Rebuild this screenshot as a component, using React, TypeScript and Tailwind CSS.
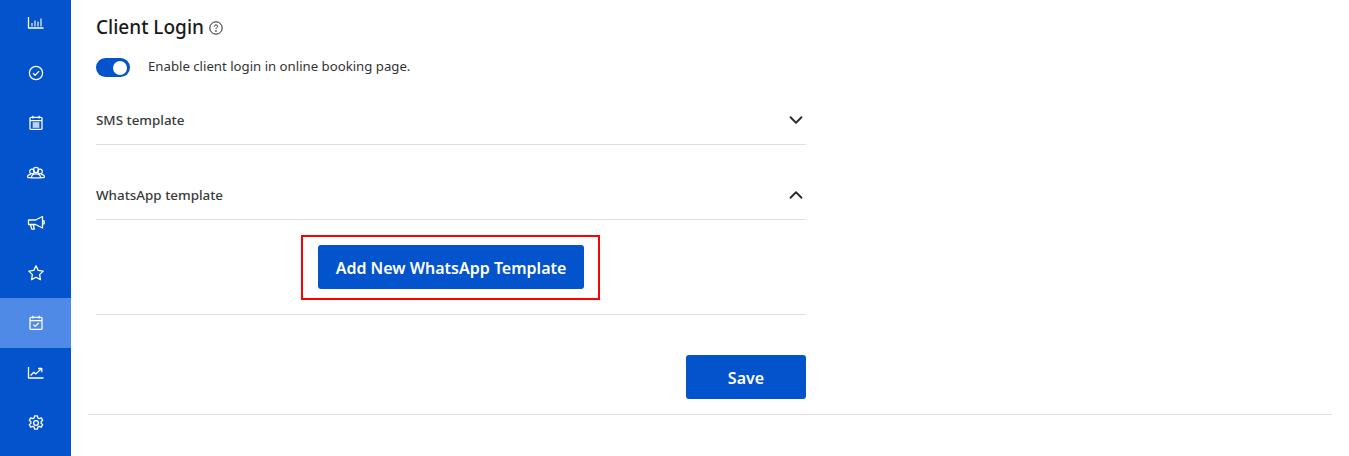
import type { ReactNode } from "react"
import { ChevronDown, ChevronUp } from "lucide-react"

const navIcons: ReactNode[] = [
  // chart
  <g key="chart">
    <path d="M1.5 3v11h15" />
    <path d="M5 12.5V9M8 12.5V6.5M11 12.5V7.5M14 12.5V4.5" strokeWidth="1.4" opacity="0.8" />
  </g>,
  // check circle
  <g key="check">
    <circle cx="9" cy="9" r="6.6" />
    <path d="M6 9.2l2.1 2.1 4-4.2" />
  </g>,
  // calendar
  <g key="calendar">
    <rect x="3" y="3.4" width="12" height="12" rx="1" />
    <path d="M5.8 1.8v2.6M12.2 1.8v2.6M3 6.6h12" />
    <path d="M5.5 9h7M5.5 11h7M5.5 13h7M7 8.5v5M9 8.5v5M11 8.5v5" strokeWidth="1" />
  </g>,
  // group
  <g key="group" strokeWidth="1.15">
    <circle cx="5" cy="7.4" r="2.3" />
    <circle cx="13" cy="7.4" r="2.3" />
    <circle cx="9" cy="6" r="2.6" />
    <path d="M0.5 13.5c0-2 1.6-3.2 3.4-3.2M17.5 13.5c0-2-1.6-3.2-3.4-3.2" />
    <path d="M4.5 13.8c0-2.6 2-3.9 4.5-3.9s4.5 1.3 4.5 3.9z" />
    <path d="M0.5 13.6h4M13.5 13.6h4" />
  </g>,
  // megaphone
  <g key="megaphone">
    <path d="M1.5 6h7L15.5 2.5v11.5L8.5 10.5h-7z" />
    <path d="M3.5 10.5l1.2 4.7h2.6l-1-4.7M15.5 7h1.6v2.8h-1.6" />
  </g>,
  // star
  <path key="star" d="M9 1.8l2.2 4.6 5 .7-3.6 3.5.9 5L9 13.2l-4.5 2.4.9-5L1.8 7.1l5-.7z" />,
  // calendar check
  <g key="calendar-check">
    <rect x="3" y="3.4" width="12" height="12" rx="1" />
    <path d="M5.8 1.8v2.6M12.2 1.8v2.6M3 6.6h12" />
    <path d="M6.3 10.6l1.9 1.8 3.5-3.4" />
  </g>,
  // trend
  <g key="trend">
    <path d="M1.5 3v11h15" />
    <path d="M3.5 11.5l3.4-3.2 2 1.6L14 5" />
    <path d="M11 4.5h3.8v3.8" />
  </g>,
  // settings
  <g key="settings">
    <circle cx="9" cy="9" r="2.4" />
    <path d="M7.6 1.8h2.8l.4 2.1 1.5.8 2-.8 1.4 2.4-1.6 1.4v1.6l1.6 1.4-1.4 2.4-2-.8-1.5.8-.4 2.1H7.6l-.4-2.1-1.5-.8-2 .8-1.4-2.4 1.6-1.4V7.7L2.3 6.3l1.4-2.4 2 .8 1.5-.8z" />
  </g>,
]

function Sidebar() {
  return (
    <aside className="w-[71px] h-[456px] shrink-0 overflow-hidden bg-[#0353cc]">
      <nav className="flex flex-col -mt-0.5">
        {navIcons.map((icon, i) => (
          <div
            key={i}
            className={`h-[50px] flex items-center justify-center ${i === 6 ? "bg-[#4f8ae6]" : ""}`}
          >
            <svg
              width="18"
              height="18"
              viewBox="0 0 18 18"
              fill="none"
              stroke="white"
              strokeWidth="1.3"
              strokeLinejoin="round"
            >
              {icon}
            </svg>
          </div>
        ))}
      </nav>
    </aside>
  )
}

function TemplateHeader({ label, open }: { label: string; open?: boolean }) {
  return (
    <div className="h-[50px] flex items-center justify-between border-b border-[#e0e0e0]">
      <span className="text-[13.4px] font-medium text-[#3a3a3a] pt-[2px]">{label}</span>
      {open ? (
        <ChevronUp className="w-[22px] h-[22px] text-[#2b2b2b] mr-[-1px]" strokeWidth={2} />
      ) : (
        <ChevronDown className="w-[22px] h-[22px] text-[#2b2b2b] mr-[-1px]" strokeWidth={2} />
      )}
    </div>
  )
}

export default function App() {
  return (
    <div className="flex w-[1349px] h-[456px] overflow-hidden bg-white font-['Noto_Sans',sans-serif]">
      <Sidebar />
      <main className="flex-1 pl-[17px] pr-[17px] min-w-0">
        <div className="border-b border-[#e0e0e0] h-[415px]">
          <div className="w-[710px] ml-2">
            <div className="flex items-center gap-[5px] pt-[13px] h-[40px]">
              <h1 className="text-[19px] font-medium leading-[26px] text-[#1a1a1a]">Client Login</h1>
              <svg width="14" height="14" viewBox="0 0 14 14" fill="none" stroke="#222" strokeWidth="1" className="mt-[2px]">
                <circle cx="7" cy="7" r="6.2" />
                <path d="M5.4 5.5c0-1 .7-1.6 1.6-1.6s1.6.6 1.6 1.5c0 1.2-1.6 1.3-1.6 2.6" />
                <circle cx="7" cy="10" r="0.4" />
              </svg>
            </div>
            <div className="flex items-center gap-[18px] mt-[17px] h-[20px]">
              <div className="w-[34px] h-[19px] mt-[1px] rounded-full bg-[#0353cc] flex items-center justify-end pr-[3px]">
                <div className="w-[14px] h-[14px] rounded-full bg-white" />
              </div>
              <span className="text-[13.2px] text-[#333]">Enable client login in online booking page.</span>
            </div>
            <div className="mt-[18px]">
              <TemplateHeader label="SMS template" />
            </div>
            <div className="mt-[25px]">
              <TemplateHeader label="WhatsApp template" open />
            </div>
            <div className="h-[95px] flex items-center justify-center border-b border-[#e0e0e0]">
              <div className="border-2 border-[#ff0000] pt-[8px] pb-[9px] pl-[15px] pr-[14px] ml-[-1px]">
                <button className="block h-[44px] w-[266px] pt-[2px] rounded-[3px] bg-[#0353cc] text-white text-[16px] font-semibold">
                  Add New WhatsApp Template
                </button>
              </div>
            </div>
            <div className="flex justify-end mt-[40px]">
              <button className="h-[44px] w-[120px] pt-[2px] rounded-[3px] bg-[#0353cc] text-white text-[16px] font-semibold">
                Save
              </button>
            </div>
          </div>
        </div>
      </main>
    </div>
  )
}
